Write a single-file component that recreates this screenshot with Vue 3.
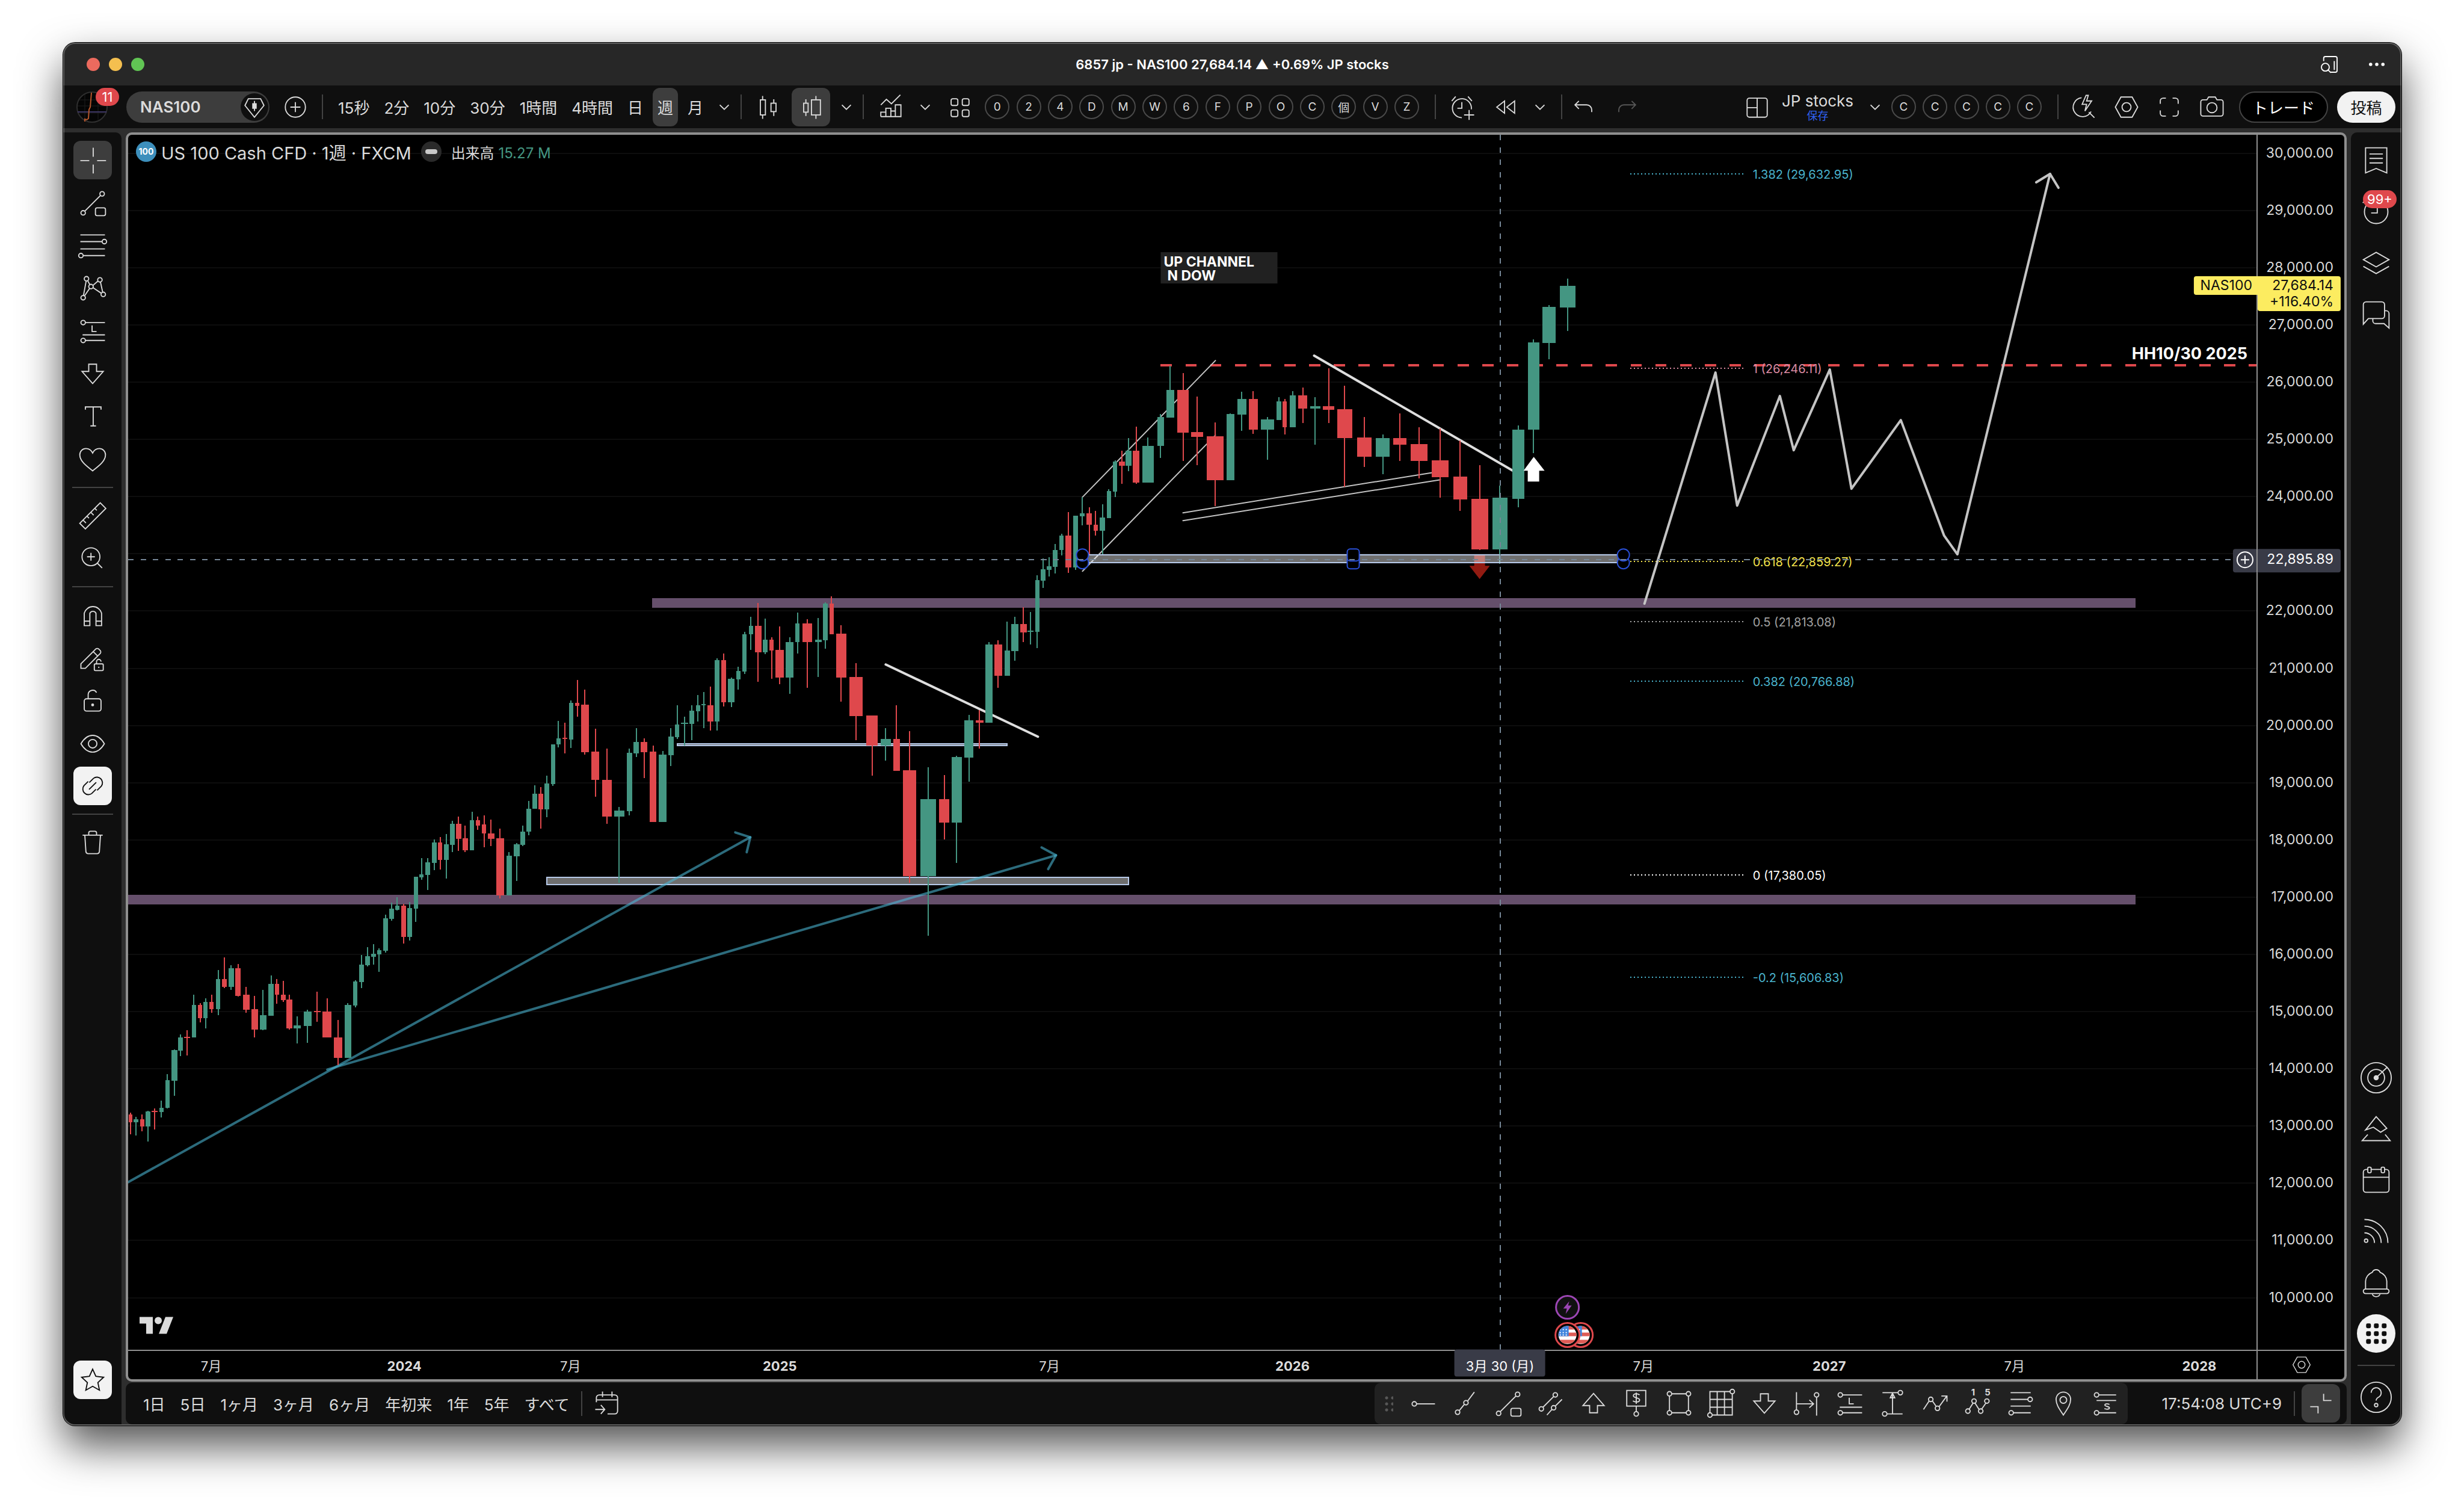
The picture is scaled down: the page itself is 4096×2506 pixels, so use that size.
<script setup>
import { h } from 'vue'

/* ---------- icons, drawn on a 28 x 28 grid ---------- */
const icons = {
  cross: '<path d="M3 14.5h8M18 14.5h8M14.5 3v8M14.5 18v8"/>',
  trend: '<circle cx="5.5" cy="23" r="2"/><circle cx="22.5" cy="6" r="2"/><path d="M7 21.5 21 7.5"/><rect x="16.5" y="18.5" width="9" height="7" rx="1.5"/>',
  fib: '<path d="M3 4.5h22M3 10.5h19.5M3 17h22M5.5 23H25"/><circle cx="24.5" cy="10.5" r="2"/><circle cx="3.5" cy="23" r="2"/>',
  xabcd: '<circle cx="5.5" cy="22.5" r="2"/><circle cx="8.5" cy="5.5" r="2"/><circle cx="12.5" cy="12.5" r="2"/><circle cx="20.5" cy="6.5" r="2"/><circle cx="23.5" cy="19.5" r="2"/><path d="M5.8 20.5 8.2 7.5M9.5 7.2l2 3.6M11.3 14.1l-4.6 6.8M14.2 11.5l4.6-4M21 8.5l2 9M14.3 13.5l7.5 5"/>',
  forecast: '<circle cx="5.5" cy="6.5" r="2"/><path d="M7.5 6.5H25M5 17.5h20M7.5 22.5H25M13.5 9v5.5h4"/><circle cx="5.5" cy="22.5" r="2"/>',
  down: '<path d="M10.5 5.5h7V12h6L14 22.8 4.5 12h6z"/>',
  text: '<path d="M7.5 8V5.5h14V8M14.5 5.5v17M12 22.5h5"/>',
  heart: '<path d="M14 24.5C9 20.5 2.5 16 2.5 10.2 2.5 6.800 5 4.500 8 4.500c2.500 0 4.700 1.300 6 4 1.300-2.700 3.500-4 6-4 3 0 5.500 2.300 5.500 5.700C25.500 16 19 20.500 14 24.500z"/>',
  ruler: '<path d="M2.5 20.800 20.800 2.500l5 5L7.500 25.800zM5.500 18l2.500 2.500M9 14.500l1.700 1.700M12.400 11l2.500 2.500M16 7.500l1.700 1.700"/>',
  zoom: '<circle cx="12.5" cy="12.5" r="8"/><path d="m18.300 18.300 4.200 4.200M12.500 9v7M9 12.500h7"/>',
  magnet: '<path d="M6.5 23.5v-11a8 8 0 0 1 15.500 0v11h-5v-11a3 3 0 0 0-5.500 0v11zM6.500 19.500h5M17 19.500h5"/>',
  pencil: '<path d="M3.5 19.5v4h4l11-11-4-4zM14.500 8.500l2.200-2.200a2 2 0 0 1 2.800 0l1.200 1.200a2 2 0 0 1 0 2.800l-2.200 2.200"/><rect x="15.5" y="19.5" width="8" height="6" rx="1"/><path d="M17.500 19.500v-2a2 2 0 0 1 4 0"/><path d="M19.500 22v1.200"/>',
  lock: '<rect x="6.5" y="12.5" width="15" height="11" rx="2"/><path d="M10 12.500V8.500a4 4 0 0 1 7.500-1.500"/><circle cx="14" cy="18" r=".8" fill="currentColor"/>',
  eye: '<path d="M3.5 14.5c3-5 6.500-7.500 10.500-7.500s7.500 2.500 10.500 7.500C21.500 19.500 18 22 14 22S6.500 19.500 3.500 14.500z"/><circle cx="14" cy="14.5" r="3.8"/>',
  link: '<path d="m11 11 3.800-3.800a5 5 0 0 1 7 7L18 18M17 17l-3.800 3.800a5 5 0 0 1-7-7L10 10M10.800 17.200l6.400-6.400"/>',
  trash: '<path d="M5 7.5h18M10.500 7.500v-2a1.500 1.500 0 0 1 1.500-1.500h4a1.500 1.500 0 0 1 1.500 1.500v2M7 7.500l1 15a2 2 0 0 0 2 1.500h8a2 2 0 0 0 2-1.500l1-15"/>',
  star: '<path d="m14 4.500 2.900 6.400 6.900.8-5.100 4.700 1.400 6.900-6.100-3.500-6.100 3.500 1.400-6.900-5.100-4.700 6.900-.8z"/>',
  gem: '<path d="M8.500 6.500h11l3 6L14 23 5.500 12.500z"/><rect x="12" y="10.5" width="4" height="5" fill="currentColor" stroke="none"/><path d="M14 8.500v9"/>',
  plus: '<circle cx="14" cy="14" r="9"/><path d="M14 9.500v9M9.500 14h9"/>',
  candles: '<path d="M9 4v3.500M9 21v3.500M19 7v3.500M19 18v4"/><rect x="7" y="7.5" width="4.500" height="13.5"/><rect x="16.5" y="10.5" width="4.500" height="7.5"/>',
  volcandles: '<path d="M9.500 7v3.500M9.500 18.500v3.500M18.500 4v3.500M18.500 21v3.500"/><rect x="7.5" y="10.5" width="4" height="8"/><rect x="14.5" y="7.5" width="8" height="13.5"/>',
  chev: '<path d="m10 12 4 4 4-4"/>',
  indicators: '<path d="m5.500 12 5-5 4.500 4 8-8M5.500 22.500h18V12h-5v10.500M5.500 22.500v-4h4.500v4M10 19v-4h4.500v2.500h4M14.500 17v5.500"/>',
  grid: '<rect x="6.5" y="6.5" width="6" height="6" rx="1.500"/><rect x="16.5" y="6.5" width="6" height="6" rx="1.500"/><rect x="6.5" y="16.5" width="6" height="6" rx="1.500"/><rect x="16.5" y="16.5" width="6" height="6" rx="1.500"/>',
  alarm: '<path d="M22 16a8.500 8.500 0 1 0-8.500 7.500M13.500 9.500v5.500h-4M4.500 8.500l3.500-4M22.500 8.500 19 4.500M20 16.500v9M15.500 21h9"/>',
  rewind: '<path d="M13.500 8.500v11l-7-5.500zM22.500 8.500v11l-7-5.500z"/>',
  undo: '<path d="M9.500 8.500 6 12l3.500 3.500M6.500 12h10a4.500 4.500 0 0 1 4.500 4.500v2"/>',
  redo: '<path d="M18.500 8.500 22 12l-3.500 3.500M21.500 12h-10a4.500 4.500 0 0 0-4.500 4.500v2"/>',
  layout: '<rect x="5" y="6" width="18" height="17" rx="2"/><path d="M14 6v17M5 14.500h9"/>',
  quick: '<path d="M12 5.600A8.500 8.500 0 1 0 20.500 18M18.500 18.500l5 5M16 3.500l-3.500 8h4l-1.500 6 6-9h-4.500l1.500-5z"/>',
  hex: '<path d="M9 5h10l5 9-5 9H9l-5-9z"/><circle cx="14" cy="14" r="4"/>',
  full: '<path d="M6 11V8.500A2.500 2.500 0 0 1 8.500 6H11M17 6h2.500A2.500 2.500 0 0 1 22 8.500V11M22 17v2.500a2.500 2.500 0 0 1-2.500 2.500H17M11 22H8.500A2.500 2.500 0 0 1 6 19.500V17"/>',
  camera: '<path d="M4 9.500a2 2 0 0 1 2-2h3.500l1.500-2.500h6l1.500 2.500H22a2 2 0 0 1 2 2V20a2 2 0 0 1-2 2H6a2 2 0 0 1-2-2z"/><circle cx="14" cy="14.5" r="4.500"/>',
  tabs: '<path d="M9 11V8.500A1.500 1.500 0 0 1 10.500 7h9A1.500 1.500 0 0 1 21 8.500v11a1.500 1.500 0 0 1-1.500 1.500H15M18.500 11v8"/><circle cx="10.5" cy="16.5" r="3.500"/><path d="m13 19 2.500 2.500"/>',
  dots: '<g fill="currentColor" stroke="none"><circle cx="8.5" cy="14" r="1.500"/><circle cx="14" cy="14" r="1.500"/><circle cx="19.5" cy="14" r="1.500"/></g>',
  bookmark: '<path d="M4.500 2.500h19v22.500L14 21 4.500 25zM8 8h12M8 12h12M8 16h12"/>',
  clock: '<circle cx="14" cy="14" r="10.500"/><path d="M15 8v7H9.500M2 6l3-3"/>',
  layers: '<path d="M14 4.500 25.500 11 14 17.500 2.500 11zM2.500 17 14 23.500 25.500 17"/>',
  chat: '<path d="M2.500 23V5.500a2.500 2.500 0 0 1 2.500-2.500h14A2.500 2.500 0 0 1 21.500 5.500v10a2.500 2.500 0 0 1-2.500 2.500H7zM21.500 11H23a2.500 2.500 0 0 1 2.500 2.500v13l-4.500-4h-7.500a2.500 2.500 0 0 1-2.500-2.500v-2"/>',
  radar: '<circle cx="14" cy="14" r="13.5"/><circle cx="14" cy="14" r="7.500"/><circle cx="14" cy="14" r="1.800" fill="currentColor"/><path d="m15 13 8.500-8"/>',
  pyramid: '<path d="M14 3 4.500 15l7-2.500 6.500 4.500 5.500-3.500zM6.500 19 1.500 24.500h25L22 19"/>',
  calendar: '<rect x="2.5" y="4.500" width="23" height="20.500" rx="2.500"/><path d="M2.500 11.500h23"/><g fill="#0f0f0f"><rect x="6.500" y="2.500" width="3" height="5" rx="1"/><rect x="18.500" y="2.500" width="3" height="5" rx="1"/></g>',
  rss: '<circle cx="5" cy="22.5" r="1.500"/><path d="M3.500 15.500a9 9 0 0 1 9 9M3.500 9.500a15 15 0 0 1 15 15M3.500 3.500a21 21 0 0 1 21 21"/>',
  bell: '<path d="M4.500 20v-7a9 9 0 0 1 6-8 3.800 3.800 0 0 1 7 0 9 9 0 0 1 6 8v7"/><rect x="2.500" y="20" width="23" height="4" rx="2"/><path d="M10.500 24.500a3.800 3.800 0 0 0 7 0"/>',
  apps: '<g fill="currentColor" stroke="none"><rect x="5" y="5" width="4.300" height="4.300" rx="1.300"/><rect x="12" y="5" width="4.300" height="4.300" rx="1.300"/><rect x="19" y="5" width="4.300" height="4.300" rx="1.300"/><rect x="5" y="12" width="4.300" height="4.300" rx="1.300"/><rect x="12" y="12" width="4.300" height="4.300" rx="1.300"/><rect x="19" y="12" width="4.300" height="4.300" rx="1.300"/><rect x="5" y="19" width="4.300" height="4.300" rx="1.300"/><rect x="12" y="19" width="4.300" height="4.300" rx="1.300"/><rect x="19" y="19" width="4.300" height="4.300" rx="1.300"/></g>',
  help: '<circle cx="14" cy="14" r="13.5"/><path d="M9.500 10a4.500 4.500 0 1 1 6.500 4c-1.500.8-2 1.500-2 3"/><circle cx="14" cy="21" r="1.500"/>',
  goto: '<path d="M4.500 13V9A2.500 2.500 0 0 1 7 6.500h14A2.500 2.500 0 0 1 23.500 9v12a2.500 2.500 0 0 1-2.500 2.500h-6.500M4.500 11h19M10 3.500v5M18.500 3.500v5M3.500 19.500h8M8.500 15.500l3.500 4-3.500 4"/>',
  hray: '<circle cx="6.5" cy="14.5" r="2"/><path d="M8.500 14.500H25"/>',
  tline: '<circle cx="7" cy="22" r="2"/><circle cx="14.5" cy="13.5" r="2"/><path d="m8.500 20.500 4.500-5.500M16 12l6-8"/>',
  channel: '<circle cx="5.5" cy="19" r="2"/><circle cx="18" cy="6.5" r="2"/><circle cx="16.5" cy="18" r="2"/><path d="M7 17.500 16.500 8M10.500 24.500l4.500-5M18 16.500l6-6"/>',
  up: '<path d="M10.500 22.500h7V16h6L14 5.200 4.500 16h6z"/>',
  note: '<rect x="5.5" y="2.500" width="17" height="14"/><path d="M14 16.500v5M17 6.500c-3-2-6-.8-5.500 1s5.500 1.500 5.500 3.500-3.500 2.500-6 .8M14 4.500v10"/><circle cx="14" cy="23.5" r="2"/>',
  rect: '<circle cx="5.5" cy="5.5" r="2"/><circle cx="22.5" cy="5.5" r="2"/><circle cx="5.5" cy="22.5" r="2"/><circle cx="22.5" cy="22.5" r="2"/><path d="M7.500 5.500h13M7.500 22.500h13M5.500 7.500v13M22.500 7.500v13"/>',
  lattice: '<path d="M3.500 23V3.500h19M5.500 24.500h18V5.500M10 3.500v21M16.500 3.500v21M3.500 10.500h20M3.500 17.500h20"/><circle cx="3.5" cy="24.5" r="2" fill="#212121"/><circle cx="23.5" cy="3.5" r="2" fill="#212121"/>',
  range: '<path d="M4.500 4v16M22.500 8.500V25M4.500 14.500h15M16 11l3.800 3.500L16 18"/><circle cx="4.5" cy="22" r="2"/><circle cx="22.5" cy="6.5" r="2"/>',
  vrange: '<path d="M5 4.500h14M9 23.500h14M14 6v17M14 5l-2 4h4z"/><circle cx="21" cy="4.5" r="2"/><circle cx="7" cy="23.5" r="2"/>',
  zigzag: '<circle cx="10" cy="10.5" r="2"/><circle cx="16" cy="18.5" r="2"/><path d="m3.500 19.500 5-7.500M11.500 12l3.500 5M17.500 17 24 8M19.500 7.500h5v5"/>',
  elliott: '<circle cx="5" cy="21" r="2"/><circle cx="10.5" cy="12" r="2"/><circle cx="16.5" cy="21" r="2"/><circle cx="22" cy="12" r="2"/><path d="M6 19.500 9.500 14M11.500 14l3.500 5.500M17.500 19l3.500-5"/><text x="8" y="7" font-size="8" fill="currentColor" stroke="none" font-weight="700">1</text><text x="20" y="7" font-size="8" fill="currentColor" stroke="none" font-weight="700">5</text>',
  fib2: '<path d="M5 4.500h18M5 10.500h16M5 16.500h18M7.500 22.500H23"/><circle cx="22.5" cy="10.5" r="2"/><circle cx="5.5" cy="22.5" r="2"/>',
  pin: '<path d="M14 24.500C10 18.500 7.500 15 7.500 10.500a6.500 6.500 0 0 1 13 0c0 4.500-2.500 8-6.500 14z"/><circle cx="14" cy="11" r="3"/>',
  short: '<circle cx="5.5" cy="6.5" r="2"/><path d="M7.500 6.500H23M5.500 11.500H23M7.500 22.500H23M17 15c-2.500-1-4.500-.3-4 .8s4 1 4 2.200-2 1.800-4.500.7"/><circle cx="5.5" cy="22.5" r="2"/>',
  collapse: '<path d="M16.500 5.500v6h7M4.500 17h7v6"/>'
}
const Icon = (props) =>
  h('svg', { class: 'ic', viewBox: '0 0 28 28', 'aria-hidden': 'true', innerHTML: icons[props.name] })
Icon.props = ['name']

/* ---------- toolbars ---------- */
const intervals = ['15秒', '2分', '10分', '30分', '1時間', '4時間', '日', '週', '月']
const templates = ['0', '2', '4', 'D', 'M', 'W', '6', 'F', 'P', 'O', 'C', '個', 'V', 'Z']
const leftTools = [
  ['cross', 'trend', 'fib', 'xabcd', 'forecast', 'down', 'text', 'heart'],
  ['ruler', 'zoom'],
  ['magnet', 'pencil', 'lock', 'eye', 'link'],
  ['trash']
]
const ranges = ['1日', '5日', '1ヶ月', '3ヶ月', '6ヶ月', '年初来', '1年', '5年', 'すべて']
const favourites = ['hray', 'tline', 'trend', 'channel', 'up', 'note', 'rect', 'lattice', 'down', 'range', 'forecast', 'vrange', 'zigzag', 'elliott', 'fib2', 'pin', 'short']

/* ---------- chart geometry ---------- */
const K = 0.9343
const X = (v) => Math.round((v - 228) * K)
const Y = (v) => Math.round((v - 240) * K)
const path = (pts) => 'M' + pts.map(([a, b]) => X(a) + ' ' + Y(b)).join('L')

const gridStep = 101.76
const gridY = Array.from({ length: 21 }, (_, i) => Y(273 + gridStep * i))
const prices = gridY
  .map((y, i) => ({ y: y - 1, label: (30 - i) + ',000.00' }))
  .filter((p) => p.label !== '23,000.00')

const dates = [
  [376, '7月'], [719, '2024', 1], [1015, '7月'], [1387, '2025', 1], [1867, '7月'], [2299, '2026', 1],
  [2923, '7月'], [3254, '2027', 1], [3583, '7月'], [3912, '2028', 1]
]

/* each row: centre, body width, 1 = rising / 0 = falling, high, body top, body bottom, low */
const series = [
  {
    x0: 220, y0: 1150, sx: 0.574, sy: 0.6378,
    rows: [
      [21, 11, 0, 1300, 1306, 1327, 1361], [38, 14, 1, 1312, 1319, 1327, 1364], [57, 13, 0, 1305, 1319, 1339, 1353],
      [75, 14, 1, 1295, 1297, 1339, 1381], [96, 18, 0, 1289, 1295, 1298, 1347], [117, 14, 1, 1267, 1286, 1298, 1314],
      [136, 14, 1, 1192, 1210, 1287, 1289], [157, 18, 1, 1124, 1126, 1212, 1253], [176, 14, 1, 1082, 1090, 1127, 1143],
      [197, 18, 0, 1071, 1088, 1091, 1140], [218, 14, 1, 971, 999, 1091, 1091], [237, 14, 0, 994, 999, 1036, 1049],
      [254, 14, 1, 982, 991, 1036, 1066], [273, 13, 0, 972, 991, 1011, 1022], [293, 14, 1, 902, 928, 1011, 1029],
      [312, 14, 0, 867, 928, 949, 952], [333, 17, 1, 889, 898, 949, 958], [355, 17, 0, 886, 898, 974, 977],
      [380, 20, 0, 950, 972, 1013, 1022], [406, 21, 0, 974, 1011, 1069, 1090], [432, 21, 1, 958, 1029, 1069, 1071],
      [457, 17, 1, 917, 941, 1030, 1030], [475, 14, 0, 928, 941, 972, 996], [495, 14, 0, 933, 971, 986, 991],
      [514, 18, 0, 972, 985, 1065, 1069], [538, 21, 1, 1032, 1057, 1065, 1107], [570, 24, 1, 1013, 1018, 1058, 1105],
      [600, 21, 0, 963, 1016, 1019, 1047], [631, 28, 0, 982, 1019, 1091, 1091], [665, 27, 0, 1041, 1090, 1148, 1168],
      [695, 21, 1, 994, 1000, 1148, 1148], [718, 14, 1, 931, 935, 1002, 1007], [737, 14, 1, 861, 887, 936, 953],
      [756, 14, 1, 839, 864, 889, 892], [775, 14, 1, 831, 858, 866, 887], [792, 14, 1, 842, 847, 859, 908],
      [812, 14, 1, 748, 759, 848, 853], [831, 14, 1, 715, 732, 760, 765], [848, 14, 1, 699, 723, 734, 736],
      [868, 14, 0, 718, 723, 811, 828], [887, 14, 1, 713, 729, 811, 820], [906, 14, 1, 643, 643, 731, 768],
      [923, 14, 1, 590, 635, 644, 651], [943, 14, 1, 590, 602, 637, 679], [963, 14, 1, 539, 546, 604, 624],
      [981, 14, 0, 532, 546, 596, 622], [1000, 14, 1, 524, 552, 596, 648], [1019, 14, 1, 486, 494, 554, 574],
      [1038, 17, 0, 474, 494, 536, 571], [1059, 17, 0, 500, 535, 568, 574], [1080, 14, 1, 461, 485, 568, 568],
      [1098, 14, 0, 474, 485, 499, 511], [1117, 14, 0, 472, 497, 522, 560], [1139, 21, 0, 483, 521, 536, 557],
      [1167, 24, 0, 508, 535, 695, 702], [1195, 18, 1, 574, 583, 695, 695], [1218, 18, 1, 549, 552, 585, 654],
      [1237, 14, 1, 499, 516, 554, 557], [1256, 14, 1, 431, 452, 517, 527], [1274, 14, 1, 387, 411, 453, 453],
      [1293, 14, 0, 392, 411, 455, 508], [1312, 14, 1, 361, 383, 455, 477], [1331, 14, 1, 273, 273, 384, 389],
      [1348, 13, 1, 207, 256, 274, 281], [1368, 14, 0, 212, 254, 257, 299], [1387, 14, 1, 151, 157, 260, 284],
      [1406, 14, 0, 94, 157, 165, 196], [1430, 25, 0, 121, 163, 295, 301], [1462, 24, 0, 230, 293, 373, 420],
      [1498, 31, 0, 285, 372, 474, 495], [1536, 31, 1, 447, 458, 474, 659]
    ]
  },
  {
    x0: 1000, y0: 950, sx: 0.6378, sy: 0.4783,
    rows: [
      [188, 16, 1, 799, 813, 1031, 1047], [207, 16, 1, 723, 774, 815, 830], [229, 18, 0, 759, 774, 811, 907],
      [254, 18, 0, 788, 809, 1070, 1070], [281, 22, 1, 807, 820, 1070, 1070], [304, 16, 1, 721, 753, 822, 863],
      [321, 13, 1, 638, 709, 755, 763], [342, 19, 1, 679, 702, 707, 788], [362, 12, 1, 638, 656, 707, 767],
      [379, 12, 1, 600, 638, 659, 698], [395, 12, 1, 587, 633, 638, 721], [414, 16, 0, 567, 636, 698, 732],
      [432, 13, 1, 462, 470, 698, 730], [451, 15, 0, 445, 470, 625, 642], [472, 18, 1, 533, 539, 625, 644],
      [492, 13, 1, 493, 510, 541, 579], [509, 13, 1, 364, 372, 512, 521], [527, 12, 1, 309, 341, 374, 431],
      [547, 19, 0, 257, 341, 439, 550], [567, 13, 1, 314, 393, 439, 447], [585, 12, 0, 383, 393, 433, 539],
      [607, 22, 0, 343, 431, 535, 558], [635, 22, 1, 383, 401, 535, 594], [657, 12, 1, 293, 332, 403, 445],
      [684, 28, 0, 316, 332, 403, 573], [715, 18, 1, 312, 393, 403, 531], [735, 13, 1, 255, 259, 395, 426],
      [752, 13, 0, 232, 259, 372, 372], [779, 28, 0, 339, 370, 533, 623], [820, 38, 0, 481, 531, 677, 767],
      [865, 31, 0, 675, 675, 788, 899], [903, 28, 1, 723, 763, 788, 843], [933, 18, 0, 636, 763, 880, 880],
      [970, 37, 0, 734, 878, 1273, 1298], [1021, 44, 1, 868, 987, 1273, 1493], [1066, 28, 0, 897, 987, 1073, 1137],
      [1101, 28, 1, 824, 830, 1073, 1223], [1135, 25, 1, 673, 692, 832, 922], [1165, 22, 0, 655, 692, 702, 797],
      [1191, 19, 1, 403, 410, 702, 702], [1217, 22, 0, 395, 410, 527, 571], [1242, 16, 1, 326, 433, 527, 527],
      [1263, 19, 1, 309, 335, 435, 472], [1287, 19, 0, 272, 335, 366, 403], [1307, 16, 1, 291, 360, 364, 410],
      [1326, 13, 1, 153, 171, 364, 424], [1342, 12, 1, 90, 132, 174, 201], [1359, 13, 1, 86, 121, 134, 157],
      [1376, 13, 1, 38, 59, 123, 148]
    ]
  },
  {
    x0: 1850, y0: 420, sx: 0.6378, sy: 0.4145,
    rows: [
      [61, 12, 1, 1279, 1286, 1348, 1370], [80, 16, 0, 1184, 1286, 1423, 1445], [100, 15, 1, 1199, 1201, 1423, 1433],
      [119, 13, 1, 1120, 1189, 1204, 1242], [138, 16, 0, 1165, 1189, 1240, 1368], [156, 12, 0, 1180, 1238, 1266, 1286],
      [175, 15, 1, 1151, 1209, 1266, 1370], [193, 12, 1, 1086, 1095, 1211, 1211], [210, 12, 1, 963, 967, 1098, 1119],
      [229, 16, 0, 922, 967, 987, 1064], [248, 16, 1, 868, 922, 987, 1008], [269, 19, 0, 818, 922, 1059, 1064],
      [302, 31, 1, 864, 900, 1059, 1059], [337, 19, 1, 765, 777, 902, 953], [364, 22, 1, 557, 661, 779, 779],
      [400, 32, 0, 589, 661, 844, 965], [439, 32, 0, 690, 842, 861, 984], [489, 47, 0, 801, 859, 1049, 1158],
      [532, 22, 1, 762, 765, 1049, 1049], [562, 25, 1, 668, 700, 767, 835], [594, 25, 0, 666, 700, 830, 849],
      [633, 37, 1, 777, 786, 830, 960], [666, 13, 1, 692, 709, 789, 789], [682, 12, 0, 700, 709, 820, 852],
      [704, 18, 1, 666, 683, 820, 820], [732, 25, 0, 651, 683, 741, 803], [767, 28, 1, 692, 731, 741, 895],
      [804, 31, 0, 567, 731, 745, 803], [849, 41, 0, 642, 743, 866, 1077], [904, 41, 0, 777, 864, 946, 991],
      [955, 38, 1, 852, 868, 946, 1023], [1003, 37, 0, 762, 868, 895, 965], [1056, 47, 0, 820, 893, 965, 1040],
      [1116, 47, 0, 825, 963, 1035, 1124], [1171, 38, 0, 877, 1032, 1131, 1180], [1226, 47, 0, 984, 1129, 1344, 1348],
      [1282, 41, 1, 1071, 1124, 1344, 1408], [1333, 34, 1, 813, 830, 1127, 1165], [1376, 31, 1, 444, 456, 832, 931],
      [1419, 38, 1, 297, 304, 458, 528], [1471, 44, 1, 183, 215, 306, 408]
    ]
  }
]
const candles = series.flatMap((s) =>
  s.rows.map(([c, w, up, hi, top, bot, lo]) => {
    const left = X(s.x0 + (c - w / 2) * s.sx)
    const right = X(s.x0 + (c + w / 2) * s.sx)
    const y = (v) => Y(s.y0 + v * s.sy)
    return {
      color: up ? '#449682' : '#df484c',
      x: left, w: right - left, y: y(top), h: Math.max(2, y(bot) - y(top)),
      wx: X(s.x0 + c * s.sx) - 1, wy: y(hi), wh: y(lo) - y(hi)
    }
  })
)

const levels = [
  [310, '1.382 (29,632.95)', '#4ab4ce'], [655, '1 (26,246.11)', '#dc8ba3'], [999, '0.618 (22,859.27)', '#f3e34c'],
  [1106, '0.5 (21,813.08)', '#a3a3a3'], [1212, '0.382 (20,766.88)', '#4ab4ce'], [1557, '0 (17,380.05)', '#ffffff'],
  [1738, '-0.2 (15,606.83)', '#4ab4ce']
]
const forecastPath = path([
  [2925, 1074], [3052, 663], [3090, 899], [3166, 704], [3191, 801], [3255, 657], [3293, 869], [3381, 747],
  [3458, 953], [3482, 986], [3647, 310]
])
const forecastHead = path([[3622, 325], [3647, 310], [3662, 334]])
const arrows = [
  path([[228, 2102], [1335, 1489]]), path([[1308, 1480], [1335, 1489], [1328, 1516]]),
  path([[582, 1902], [1878, 1521]]), path([[1853, 1507], [1878, 1521], [1865, 1546]])
]
const thin = [
  path([[1926, 884], [2162, 641]]), path([[1926, 1016], [2162, 774]]),
  path([[2104, 912], [2562, 838]]), path([[2104, 926], [2562, 853]])
]
const thick = [path([[1576, 1182], [1846, 1310]]), path([[2338, 633], [2693, 838]])]
const upArrow = path([[2728, 813], [2747, 837], [2738, 837], [2738, 857], [2718, 857], [2718, 837], [2710, 837]]) + 'z'
const downArrow = path([[2632, 1030], [2614, 1006], [2622, 1006], [2622, 987], [2642, 987], [2642, 1006], [2650, 1006]]) + 'z'
const logo = path([[248, 2342], [272, 2342], [272, 2372], [260, 2372], [260, 2354], [248, 2354]]) + 'z' +
  path([[294, 2342], [308, 2342], [297, 2372], [283, 2372]]) + 'z'
</script>

<template>
  <div class="desktop">
    <main class="window">
      <header class="titlebar">
        <div class="lights"><i class="red"></i><i class="amber"></i><i class="green"></i></div>
        <h1>6857 jp - NAS100 27,684.14 ▲ +0.69% JP stocks</h1>
        <div class="title-actions">
          <button aria-label="タブを検索"><Icon name="tabs" /></button>
          <button aria-label="メニュー"><Icon name="dots" /></button>
        </div>
      </header>

      <nav class="toolbar">
        <button class="avatar" aria-label="アカウント">
          <svg viewBox="0 0 52 52" aria-hidden="true">
            <circle cx="26" cy="26" r="25" fill="#050505" stroke="#2f2f2f" stroke-width="2" />
            <path d="M5 14h42M2 24h48M5 36h42M14 5v42M36 5v42" stroke="#1e1e1e" fill="none" />
            <path d="M2 34h48" stroke="#3d3663" stroke-width="2" />
            <path d="M14 50v-4l3 1 3-2 1-15 2-4 2-24" stroke="#b4552c" stroke-width="2" fill="none" />
          </svg>
          <span class="badge">11</span>
        </button>
        <button class="symbol"><span>NAS100</span><span class="gem"><Icon name="gem" /></span></button>
        <button class="plain add" aria-label="シンボルを比較"><Icon name="plus" /></button>
        <i class="sep"></i>
        <div class="intervals">
          <button v-for="t in intervals" :key="t" :class="{ on: t === '週' }">{{ t }}</button>
        </div>
        <button class="chev c54" aria-label="時間足"><Icon name="chev" /></button>
        <i class="sep"></i>
        <div class="pair">
          <button class="tool" aria-label="ローソク足"><Icon name="candles" /></button>
          <button class="tool on" aria-label="出来高ローソク足"><Icon name="volcandles" /></button>
        </div>
        <button class="chev c54" aria-label="チャートタイプ"><Icon name="chev" /></button>
        <i class="sep"></i>
        <button class="tool ind" aria-label="インジケーター"><Icon name="indicators" /></button>
        <button class="chev c50" aria-label="お気に入り"><Icon name="chev" /></button>
        <button class="tool" aria-label="テンプレート"><Icon name="grid" /></button>
        <div class="rings templates">
          <button v-for="t in templates" :key="t">{{ t }}</button>
        </div>
        <i class="sep after-rings"></i>
        <div class="pair">
          <button class="tool" aria-label="アラート"><Icon name="alarm" /></button>
          <button class="tool" aria-label="リプレイ"><Icon name="rewind" /></button>
        </div>
        <button class="chev c50" aria-label="リプレイ設定"><Icon name="chev" /></button>
        <i class="sep undo-sep"></i>
        <div class="pair history">
          <button class="tool" aria-label="元に戻す"><Icon name="undo" /></button>
          <button class="tool dim" aria-label="やり直す"><Icon name="redo" /></button>
        </div>

        <div class="right-group">
          <button class="tool" aria-label="レイアウト"><Icon name="layout" /></button>
          <button class="layout-name"><span>JP stocks</span><small>保存</small></button>
          <button class="chev c54" aria-label="レイアウト一覧"><Icon name="chev" /></button>
          <div class="rings layouts"><button v-for="n in 5" :key="n">C</button></div>
          <i class="sep"></i>
          <div class="pair">
            <button class="tool" aria-label="クイック検索"><Icon name="quick" /></button>
            <button class="tool" aria-label="設定"><Icon name="hex" /></button>
            <button class="tool" aria-label="全画面"><Icon name="full" /></button>
            <button class="tool" aria-label="スナップショット"><Icon name="camera" /></button>
          </div>
          <button class="trade">トレード</button>
          <button class="publish">投稿</button>
        </div>
      </nav>

      <div class="body">
        <aside class="left">
          <div v-for="(group, i) in leftTools" :key="i" class="group">
            <button v-for="n in group" :key="n" class="side" :class="{ on: n === 'cross', lit: n === 'link' }" :aria-label="n">
              <Icon :name="n" />
            </button>
          </div>
          <button class="side lit fav" aria-label="star"><Icon name="star" /></button>
        </aside>

        <section class="center">
          <div class="chart">
            <svg class="plot" viewBox="0 0 3683 2067">
              <defs>
                <clipPath id="flag"><circle r="15" /></clipPath>
                <g id="usflag">
                  <circle r="20" fill="#000" stroke="#df484c" stroke-width="3" />
                  <g clip-path="url(#flag)">
                    <rect x="-16" y="-16" width="32" height="32" fill="#fff" />
                    <path d="M-16-12h32M-16-1h32M-16 11h32" stroke="#de5b55" stroke-width="6" />
                    <rect x="-16" y="-16" width="18" height="18" fill="#3f84dd" />
                    <path d="M-13-9H1M-13-4H1M-13 0H1" stroke="#fff" stroke-width="2" stroke-dasharray="2 3" />
                  </g>
                </g>
              </defs>

              <g shape-rendering="crispEdges">
                <rect v-for="y in gridY" :key="y" x="0" :y="y - 1" :width="X(4014)" height="2" fill="#0d0d0d" />
                <rect :x="X(1160)" :y="Y(1064)" :width="X(3799) - X(1160)" height="16" fill="#654f6b" />
                <rect x="0" :y="Y(1592)" :width="X(3799)" height="16" fill="#654f6b" />
                <g fill="#6e6e6e" stroke="#b5c8e8" stroke-width="2">
                  <rect :x="X(973)" :y="Y(1561)" :width="X(2008) - X(973)" height="12" />
                  <rect :x="X(1205)" :y="Y(1323)" :width="X(1792) - X(1205)" height="3" />
                </g>
                <line :x1="X(2065)" :x2="X(4014)" :y1="Y(650)" :y2="Y(650)" stroke="#df484c" stroke-width="4" stroke-dasharray="18.7 22.4" />
                <g v-for="(l, i) in levels" :key="i">
                  <line :x1="X(2900)" :x2="X(3102)" :y1="Y(l[0])" :y2="Y(l[0])" :stroke="l[2]" stroke-width="2" stroke-dasharray="2 4" />
                </g>
              </g>

              <g fill="none" stroke-linecap="round" stroke-linejoin="round">
                <path v-for="d in thin" :key="d" :d="d" stroke="#c4c4c4" stroke-width="2" />
                <path v-for="d in thick" :key="d" :d="d" stroke="#dedede" stroke-width="4" />
                <path v-for="d in arrows" :key="d" :d="d" stroke="#4bb8d6" stroke-opacity=".58" stroke-width="4" />
              </g>

              <g shape-rendering="crispEdges">
                <g v-for="(c, i) in candles" :key="i" :fill="c.color">
                  <rect :x="c.wx" :y="c.wy" width="2" :height="c.wh" />
                  <rect :x="c.x" :y="c.y" :width="c.w" :height="c.h" />
                </g>
              </g>

              <g class="fib-text">
                <text v-for="(l, i) in levels" :key="i" :x="X(3118)" :y="Y(l[0]) + 1" :fill="l[2]">{{ l[1] }}</text>
              </g>

              <path :d="downArrow" fill="#921b12" />
              <path :d="upArrow" fill="#fff" />
              <rect :x="X(1926)" :y="Y(987)" :width="X(2888) - X(1926)" height="13" fill="#fff" fill-opacity=".43" stroke="#b5c8e8" stroke-width="2" shape-rendering="crispEdges" />
              <g fill="#000" stroke="#2a50d8" stroke-width="2">
                <template v-for="x in [1926, 2888]" :key="x">
                  <circle :cx="X(x)" :cy="Y(1001)" r="10" />
                  <circle :cx="X(x)" :cy="Y(987)" r="10" />
                </template>
                <rect :x="X(2396)" :y="Y(990)" width="20" height="20" rx="5" />
                <rect :x="X(2396)" :y="Y(976)" width="20" height="20" rx="5" />
              </g>
              <g fill="none" stroke="#c4c4c4" stroke-width="4" stroke-linejoin="round" stroke-linecap="round">
                <path :d="forecastPath" />
                <path :d="forecastHead" />
              </g>

              <rect :x="X(2065)" :y="Y(449)" width="194" height="52" fill="#212121" />
              <g class="note">
                <text :x="X(2070)" :y="Y(466)">UP CHANNEL</text>
                <text :x="X(2076)" :y="Y(490)">N DOW</text>
              </g>
              <text class="hh" :x="X(3998)" :y="Y(629)">HH10/30 2025</text>

              <path :d="logo" fill="#dbdbdb" />
              <circle :cx="X(282)" :cy="Y(2348)" r="6" fill="#dbdbdb" />

              <g stroke="#758696" stroke-width="2" stroke-dasharray="9.3 11.2" shape-rendering="crispEdges">
                <line x1="0" :x2="X(3972)" :y1="Y(996)" :y2="Y(996)" />
                <line :x1="X(2668)" :x2="X(2668)" y1="0" :y2="Y(2400)" />
              </g>

              <g :transform="`translate(${X(2788)} ${Y(2325)})`">
                <circle r="19" fill="#111" stroke="#9c46b4" stroke-width="3" />
                <path d="M3-10-7 2h6l-2 9L7-3H1z" fill="#9c46b4" />
              </g>
              <use href="#usflag" :transform="`translate(${X(2812)} ${Y(2374)})`" />
              <use href="#usflag" :transform="`translate(${X(2788)} ${Y(2374)})`" />

              <g fill="#8f8f8f" shape-rendering="crispEdges">
                <rect x="0" :y="Y(2400)" width="3683" height="2" />
                <rect :x="X(4014)" y="0" width="2" height="2067" />
              </g>

              <g class="axis">
                <text v-for="p in prices" :key="p.label" :x="X(4151)" :y="p.y">{{ p.label }}</text>
              </g>
              <g class="axis mid">
                <text v-for="d in dates" :key="d[0]" :x="X(d[0])" :y="Y(2429)" :class="{ year: d[2] }">{{ d[1] }}</text>
              </g>

              <rect :x="X(3902)" :y="Y(492)" width="112" height="31" rx="4" fill="#fcec60" />
              <rect :x="X(4016)" :y="Y(492)" width="138" height="58" rx="4" fill="#fcec60" />
              <g class="axis dark">
                <text :x="X(4006)" :y="Y(508)">NAS100</text>
                <text :x="X(4151)" :y="Y(508)">27,684.14</text>
                <text :x="X(4151)" :y="Y(536)">+116.40%</text>
              </g>

              <rect :x="X(3972)" :y="Y(976)" width="179" height="39" rx="4" fill="#393b47" />
              <rect :x="X(4014)" :y="Y(976)" width="2" height="39" fill="#8f8f8f" />
              <g fill="none" stroke="#fff" stroke-width="2">
                <circle :cx="X(3993)" :cy="Y(996)" r="13" />
                <path :d="`M${X(3993) - 7} ${Y(996)}h14m-7-7v14`" />
              </g>
              <g class="axis bright"><text :x="X(4151)" :y="Y(995)">22,895.89</text></g>

              <rect :x="X(2587)" :y="Y(2400)" width="151" height="45" rx="4" fill="#393b47" />
              <g class="axis mid bright"><text :x="X(2668)" :y="Y(2429)">3月 30 (月)</text></g>
            </svg>

            <div class="legend">
              <span class="coin">100</span>
              <span class="name">US 100 Cash CFD · 1週 · FXCM</span>
              <span class="state"></span>
              <span class="vol">出来高 <b>15.27 M</b></span>
            </div>
            <button class="axis-settings" aria-label="スケール設定"><Icon name="hex" /></button>
          </div>

          <footer class="bottom">
            <div class="ranges">
              <button v-for="r in ranges" :key="r">{{ r }}</button>
            </div>
            <i class="sep"></i>
            <button class="tool goto" aria-label="日付へ移動"><Icon name="goto" /></button>
            <div class="favs">
              <i class="grip"></i>
              <button v-for="f in favourites" :key="f" :aria-label="f"><Icon :name="f" /></button>
            </div>
            <button class="clock">17:54:08 UTC+9</button>
            <i class="sep"></i>
            <button class="tool on collapse" aria-label="折りたたむ"><Icon name="collapse" /></button>
          </footer>
        </section>

        <aside class="right">
          <button v-for="n in ['bookmark', 'clock', 'layers', 'chat']" :key="n" :aria-label="n">
            <Icon :name="n" /><span v-if="n === 'clock'" class="badge">99+</span>
          </button>
          <div class="fill"></div>
          <button v-for="n in ['radar', 'pyramid', 'calendar', 'rss', 'bell']" :key="n" :aria-label="n"><Icon :name="n" /></button>
          <button aria-label="apps"><span class="apps"><Icon name="apps" /></span></button>
          <hr />
          <button class="help" aria-label="help"><Icon name="help" /></button>
        </aside>
      </div>
    </main>
  </div>
</template>

<style>
body {
  margin: 0;
  background: #fff;
}
</style>

<style scoped>
.desktop {
  box-sizing: border-box;
  min-height: 100vh;
  padding: 71px 104px 138px 105px;
  overflow: hidden;
  background: #fff;
  font-family: Inter, "Noto Sans CJK JP", sans-serif;
  color: #dbdbdb;
}
button {
  display: flex;
  align-items: center;
  justify-content: center;
  margin: 0;
  padding: 0;
  border: 0;
  background: none;
  color: inherit;
  font: inherit;
  white-space: nowrap;
}
.ic {
  display: block;
  flex: none;
  width: 52px;
  height: 52px;
  overflow: visible;
  fill: none;
  stroke: currentColor;
  stroke-width: 1;
}
.window {
  position: relative;
  border-radius: 20px;
  background: #2e2e2e;
  box-shadow: 0 0 0 1px #000, 0 34px 70px rgba(0, 0, 0, 0.68);
}
.window::after {
  content: "";
  position: absolute;
  inset: 0;
  border: 2px solid rgba(255, 255, 255, 0.25);
  border-radius: 20px;
  pointer-events: none;
}

/* title bar */
.titlebar {
  display: grid;
  grid-template-columns: 1fr auto 1fr;
  align-items: center;
  height: 71px;
  border-radius: 20px 20px 0 0;
  background: #272727;
}
.lights {
  display: flex;
  gap: 15px;
  padding-left: 39px;
}
.lights i {
  width: 22px;
  height: 22px;
  border-radius: 50%;
}
.red { background: #ec6a5e; }
.amber { background: #f4bf4f; }
.green { background: #61c554; }
h1 {
  margin: 0;
  color: #fff;
  font-size: 22px;
  font-weight: 600;
}
.title-actions {
  display: flex;
  justify-content: flex-end;
  gap: 27px;
  padding-right: 15px;
  color: #fff;
}

/* top toolbar */
.toolbar {
  display: flex;
  align-items: center;
  height: 71px;
  padding: 0 10px 0 22px;
  background: #0f0f0f;
  font-size: 26px;
}
.sep {
  flex: none;
  width: 2px;
  height: 41px;
  background: #434343;
}
.avatar {
  position: relative;
  width: 52px;
  height: 52px;
  margin-right: 31px;
}
.avatar svg {
  width: 52px;
  height: 52px;
}
.badge {
  position: absolute;
  border-radius: 16px;
  background: #df484c;
  color: #fff;
  font-size: 22px;
  line-height: 30px;
  text-align: center;
}
.avatar .badge {
  top: -6px;
  left: 32px;
  width: 39px;
  height: 30px;
}
.symbol {
  justify-content: space-between;
  width: 238px;
  height: 52px;
  padding: 0 2px 0 23px;
  border-radius: 26px;
  background: #3d3d3d;
  font-weight: 600;
}
.gem {
  display: flex;
  align-items: center;
  justify-content: center;
  width: 46px;
  height: 46px;
  border-radius: 50%;
  background: #0f0f0f;
}
.add { margin: 0 18px 0 17px; }
.intervals {
  display: flex;
  gap: 8px;
  padding-left: 17px;
}
.intervals button {
  height: 64px;
  padding: 0 8px;
  border-radius: 12px;
}
.on { background: #3d3d3d; }
.chev { height: 64px; }
.c54 { width: 54px; }
.c50 { width: 51px; }
.tool {
  flex: none;
  width: 64px;
  height: 64px;
  border-radius: 12px;
}
.pair {
  display: flex;
  gap: 7px;
  padding-left: 12px;
}
.dim { color: #575757; }
.ind { margin-left: 12px; }
.rings {
  display: flex;
  justify-content: space-between;
}
.rings button {
  box-sizing: border-box;
  width: 41px;
  height: 41px;
  border: 2px solid #4a4a4a;
  border-radius: 50%;
  font-size: 19px;
}
.templates {
  width: 722px;
  margin-left: 10px;
}
.layouts { width: 250px; }
.after-rings { margin-left: 26px; }
.undo-sep { margin-left: 10px; }
.history { padding-left: 4px; }
.right-group {
  display: flex;
  align-items: center;
  margin-left: auto;
}
.right-group .sep { margin-left: 26px; }
.right-group .pair { padding-left: 10px; }
.layout-name {
  flex-direction: column;
  width: 137px;
}
.layout-name span { line-height: 30px; }
.layout-name small {
  color: #2f62f4;
  font-size: 18px;
  line-height: 20px;
}
.trade,
.publish {
  box-sizing: border-box;
  height: 52px;
  border-radius: 26px;
  color: #fff;
}
.trade {
  width: 148px;
  margin: 0 15px 0 13px;
  border: 2px solid #434343;
  background: #000;
}
.publish {
  width: 97px;
  background: #f2f2f2;
  color: #0f0f0f;
}

/* body */
.body {
  display: flex;
  gap: 7px;
  padding-top: 7px;
  padding-bottom: 2px;
}
.left,
.right {
  display: flex;
  flex: none;
  flex-direction: column;
  align-items: center;
  background: #0f0f0f;
}
.left {
  width: 97px;
  padding: 14px 0 42px;
  box-sizing: border-box;
  border-radius: 0 10px 0 20px;
}
.group {
  display: flex;
  flex-direction: column;
  align-items: center;
  gap: 7px;
  width: 68px;
}
.group + .group {
  margin-top: 14px;
  padding-top: 14px;
  border-top: 2px solid #434343;
}
.side {
  width: 64px;
  height: 64px;
  border-radius: 12px;
}
.lit {
  background: #f2f2f2;
  color: #0f0f0f;
}
.left .fav { margin-top: auto; }
.right {
  box-sizing: border-box;
  width: 84px;
  padding: 4px 0 5px;
  border-radius: 10px 0 20px 0;
}
.right button {
  position: relative;
  width: 80px;
  height: 85px;
}
.right .help { height: 80px; }
.right .badge {
  top: 7px;
  left: 18px;
  width: 56px;
  height: 30px;
}
.fill { flex: 1; }
.apps {
  display: flex;
  align-items: center;
  justify-content: center;
  width: 64px;
  height: 64px;
  border-radius: 50%;
  background: #f2f2f2;
  color: #0f0f0f;
}
hr {
  width: 62px;
  margin: 9px 0 12px;
  border: 0;
  border-top: 2px solid #434343;
}

/* chart */
.center {
  display: flex;
  flex: 1;
  flex-direction: column;
  gap: 2px;
  min-width: 0;
}
.chart {
  position: relative;
  overflow: hidden;
  border: 4px solid #8f8f8f;
  border-radius: 10px;
  background: #000;
}
.plot {
  display: block;
  width: 100%;
  height: auto;
}
.plot text { dominant-baseline: central; }
.axis {
  fill: #dbdbdb;
  font-size: 23px;
  text-anchor: end;
}
.mid {
  font-size: 22px;
  text-anchor: middle;
}
.year { font-weight: 700; }
.dark { fill: #0f0f0f; }
.bright { fill: #fff; }
.fib-text { font-size: 20px; }
.note {
  fill: #fff;
  font-size: 23px;
  font-weight: 700;
}
.hh {
  fill: #fff;
  font-size: 27px;
  font-weight: 700;
  text-anchor: end;
}
.legend {
  position: absolute;
  top: 8px;
  left: 13px;
  display: flex;
  align-items: center;
  height: 40px;
}
.coin {
  width: 34px;
  height: 34px;
  margin-right: 8px;
  border-radius: 50%;
  background: #3d8fbc;
  color: #fff;
  font-size: 14px;
  font-weight: 700;
  line-height: 34px;
  text-align: center;
}
.name { font-size: 29px; }
.state {
  display: flex;
  align-items: center;
  justify-content: center;
  width: 34px;
  height: 34px;
  margin: 0 16px;
  border-radius: 50%;
  background: #2a2a2a;
}
.state::before {
  content: "";
  width: 20px;
  height: 8px;
  border-radius: 4px;
  background: #c9c9c9;
}
.vol { font-size: 24px; }
.vol b {
  color: #449682;
  font-weight: 400;
}
.axis-settings {
  position: absolute;
  right: 51px;
  bottom: 0;
  height: 47px;
}
.axis-settings .ic {
  width: 40px;
  height: 40px;
}

/* bottom toolbar */
.bottom {
  display: flex;
  align-items: center;
  height: 69px;
  border-radius: 10px;
  background: #0f0f0f;
  font-size: 26px;
}
.ranges {
  display: flex;
  gap: 25px;
  padding: 0 19px 0 29px;
}
.goto { margin-left: 9px; }
.favs {
  display: flex;
  align-items: center;
  height: 69px;
  margin-left: auto;
  padding: 0 0 0 15px;
  border-radius: 10px;
  background: #212121;
}
.favs button {
  width: 71px;
  height: 64px;
}
.grip {
  width: 16px;
  height: 28px;
  margin-right: 14px;
  background: radial-gradient(circle, #575757 2px, transparent 3px) 0 0 / 10px 10px;
}
.clock { margin: 0 20px 0 57px; }
.collapse { margin: 0 11px; }
</style>
